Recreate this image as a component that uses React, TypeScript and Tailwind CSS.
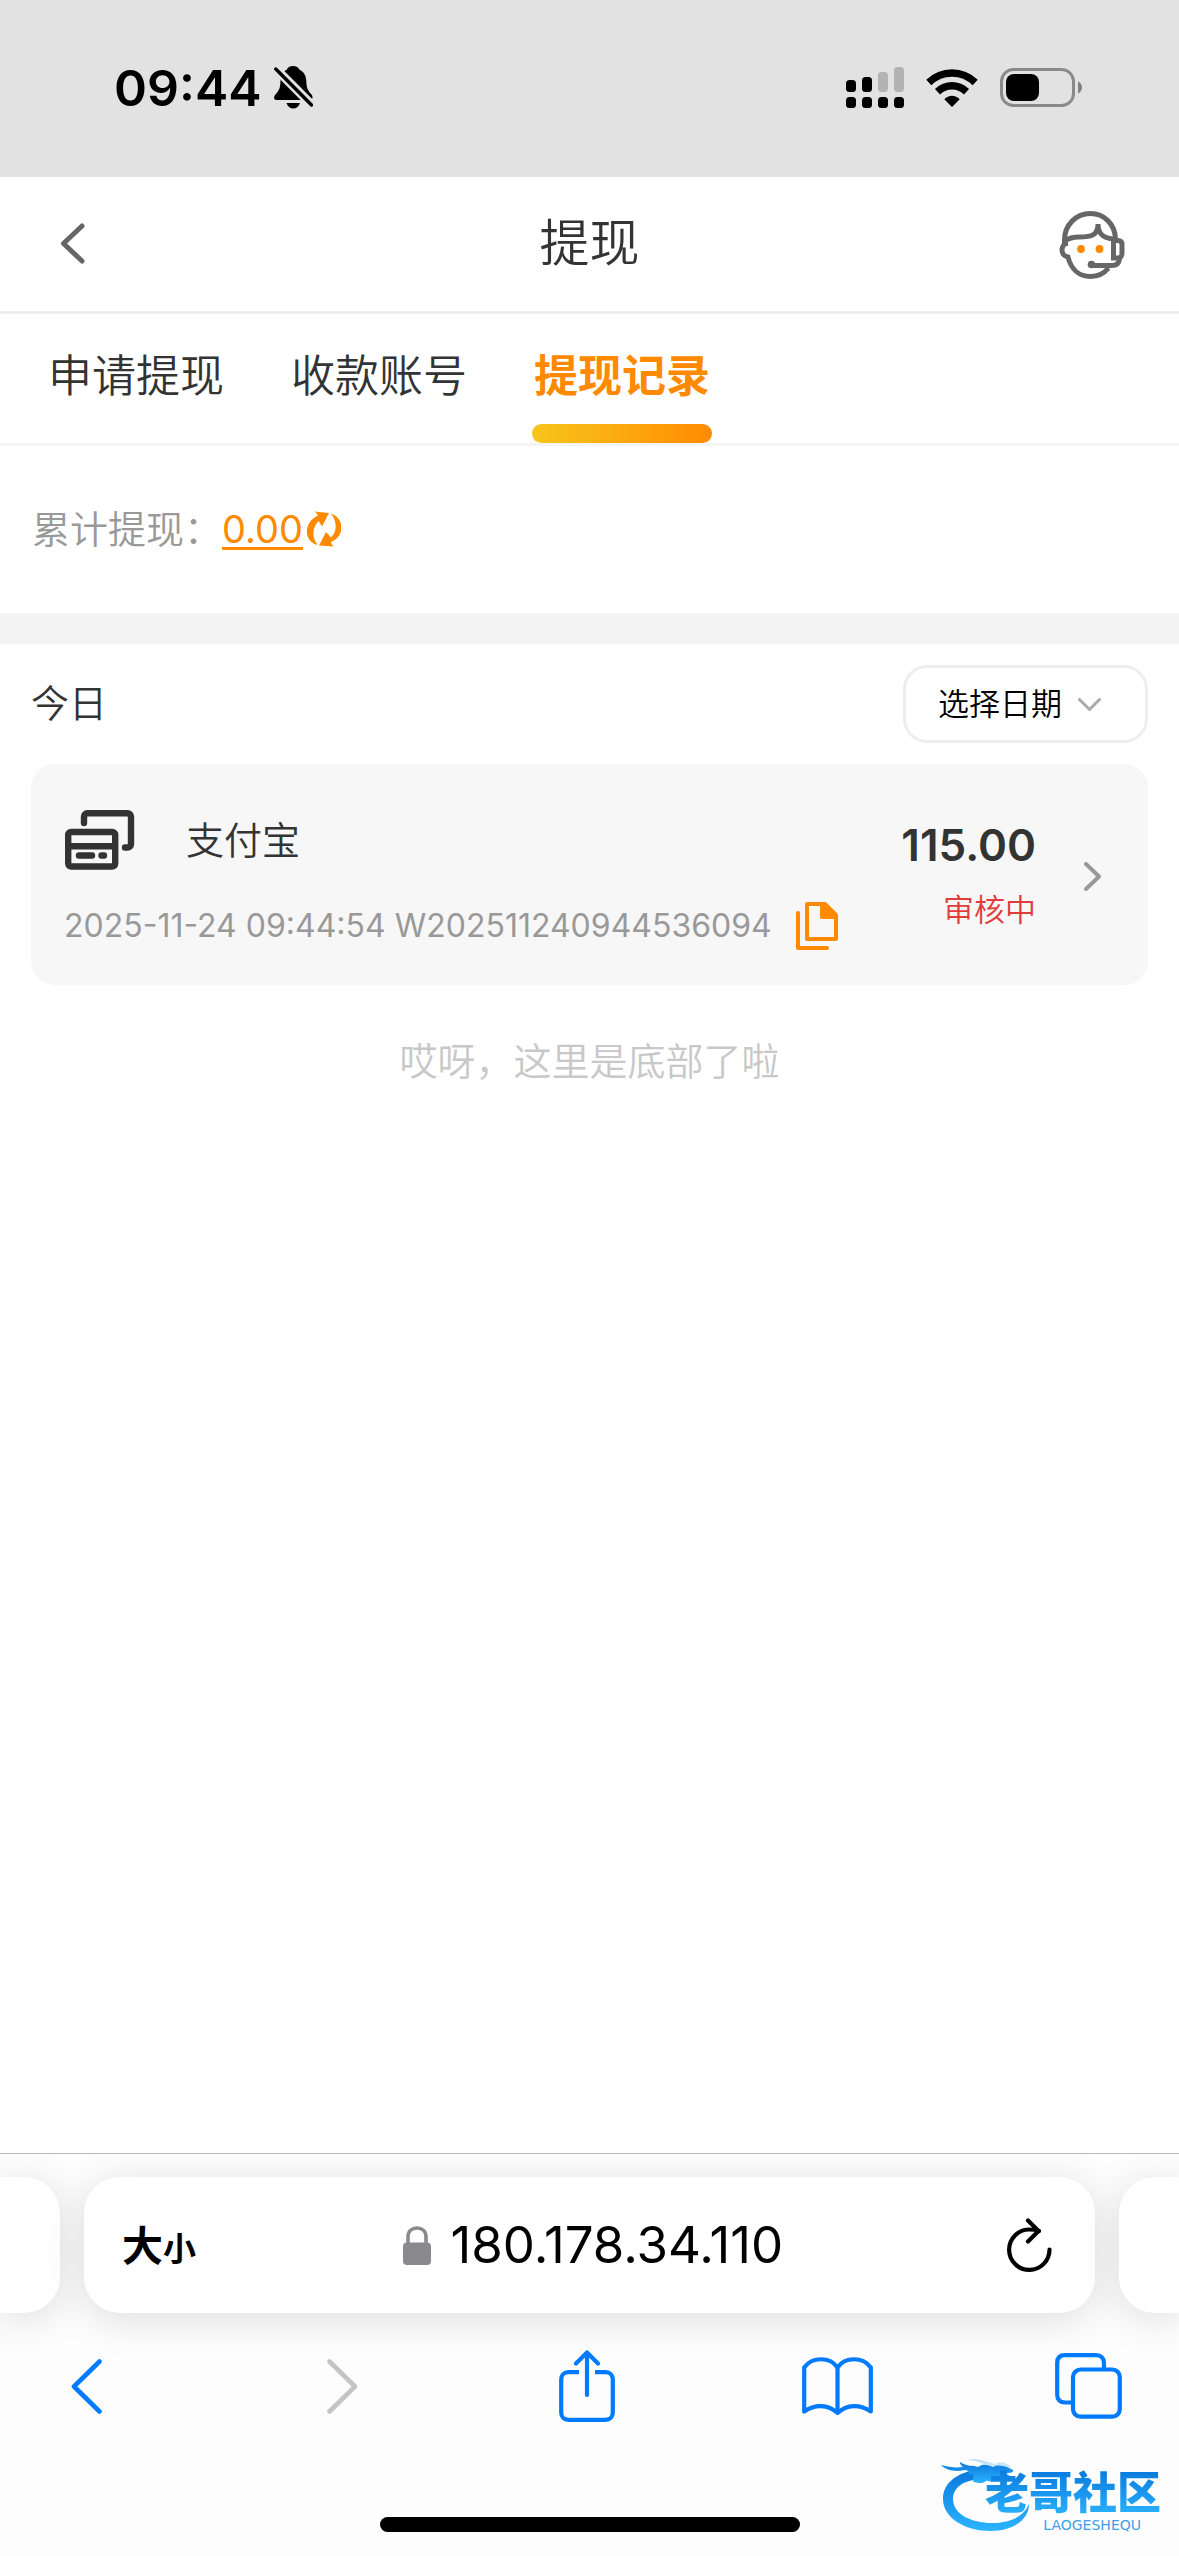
import { useState, type ReactNode } from 'react'

const TABS = ['申请提现', '收款账号', '提现记录']

interface WithdrawRecord {
  channel: string
  time: string
  orderNo: string
  amount: string
  status: string
}

const RECORDS: WithdrawRecord[] = [
  {
    channel: '支付宝',
    time: '2025-11-24 09:44:54',
    orderNo: 'W202511240944536094',
    amount: '115.00',
    status: '审核中',
  },
]

function BellOffIcon() {
  return (
    <svg width="39" height="43" viewBox="0 0 39 43" aria-hidden="true">
      <path
        d="M19 0C15.800 0 13.500 1.600 12.800 3.800C8.500 5.800 6.700 9.500 6.500 14.500C6.300 22 5.300 24 1.500 28.500C-1 31.500 0 34 3 34H35.500C38.500 34 39.500 31 37.500 28.500C33.500 24 32.600 22 32.300 15C32 9 29.500 5.500 25.500 3.800C24.500 1.500 22.300 0 19 0Z"
        fill="#000"
      />
      <path d="M12.500 37H26C25 40.500 22.500 42.500 19.200 42.500C16 42.500 13.500 40.500 12.500 37Z" fill="#000" />
      <path d="M0 1L40 41" stroke="#e2e2e2" strokeWidth="9" />
      <path d="M1.800 3L37.500 39" stroke="#000" strokeWidth="3.400" strokeLinecap="round" />
    </svg>
  )
}

function SignalIcon() {
  return (
    <svg width="58" height="42" viewBox="0 0 58 42" aria-hidden="true">
      <g fill="#000">
        <rect x="0" y="13" width="10" height="12" rx="3.500" />
        <rect x="16" y="10" width="10" height="15" rx="3.500" />
        <rect x="0" y="30" width="10" height="11" rx="3.500" />
        <rect x="16" y="30" width="10" height="11" rx="3.500" />
        <rect x="32" y="30" width="10" height="11" rx="3.500" />
        <rect x="48" y="30" width="10" height="11" rx="3.500" />
      </g>
      <g fill="#b3b3b3">
        <rect x="32" y="5" width="10" height="20" rx="3.500" />
        <rect x="48" y="0" width="10" height="25" rx="3.500" />
      </g>
    </svg>
  )
}

function WifiIcon() {
  return (
    <svg width="52" height="38" viewBox="0 0 52 38" aria-hidden="true">
      <path d="M2.800 13.500C16 .8 36 .8 49.200 13.500" fill="none" stroke="#000" strokeWidth="7.400" />
      <path d="M11.500 22.700C20 14.800 32 14.800 40.500 22.700" fill="none" stroke="#000" strokeWidth="7.400" />
      <path d="M26 38L18.300 30.200C22.500 25.500 29.500 25.500 33.700 30.200Z" fill="#000" />
    </svg>
  )
}

function BatteryIcon() {
  return (
    <svg width="83" height="40" viewBox="0 0 83 40" aria-hidden="true">
      <rect x="1.500" y="1.500" width="72" height="36" rx="12" fill="none" stroke="#8a8a8a" strokeWidth="3" />
      <rect x="6" y="6" width="33" height="27" rx="8" fill="#000" />
      <path d="M78 13.500C80.500 14.500 82 17 82 19.500C82 22 80.500 24.500 78 25.500Z" fill="#808080" />
    </svg>
  )
}

function ServiceIcon() {
  return (
    <svg width="66" height="68" viewBox="0 0 66 68" fill="none" stroke="#666" strokeWidth="5" aria-hidden="true">
      <path d="M5.500 33V29C5.500 14 17 2.500 31.500 2.500C45 2.500 56 13 56.500 28" />
      <path d="M5.500 30C10 27 14 26 20 26C33 26 39 24 39 13C39 23 44 27 54 28" />
      <path d="M9 32C1 33 1 45 9 46C12 58 20 65.500 31.500 65.500C39 65.500 45.500 62 49.500 57" />
      <path d="M54.500 29.500H59C61.500 29.500 63 31 63 33.500V42C63 45 61.500 47 59 47H54.500Z" />
      <path d="M60.500 48C60 52.500 57 54.500 53 54.500H33" />
      <circle cx="32.500" cy="53.500" r="3.800" fill="#666" stroke="none" />
      <circle cx="22" cy="38" r="3.900" fill="#ff8a00" stroke="none" />
      <circle cx="40.500" cy="38" r="3.900" fill="#ff8a00" stroke="none" />
    </svg>
  )
}

function RefreshIcon() {
  return (
    <svg width="34" height="36" viewBox="0 0 34 36" fill="#ff8a00" aria-hidden="true">
      <path d="M7 0.500L22 2L15 15.500L11.500 10C5 17 4.500 26 10.500 34C-4 30 -3.500 11 11 4.500C10 2.500 9 1.200 7 0.500Z" />
      <path d="M27 35.500L12 34.500L19 21L24 26.500C30 21 30.500 11 24 2.500C38 8 38 25 24 31C24.500 33 25.500 34.500 27 35.500Z" />
    </svg>
  )
}

function CardsIcon() {
  return (
    <svg
      width="70"
      height="60"
      viewBox="0 0 70 60"
      fill="none"
      stroke="#333"
      strokeWidth="6.400"
      strokeLinecap="round"
      aria-hidden="true"
    >
      <path d="M19 13V7C19 4.800 20.500 3.300 22.500 3.300H62.500C64.500 3.300 66 4.800 66 7V34C66 36 64.500 37.500 62.500 37.500H60" />
      <rect x="3.200" y="22" width="47" height="34.500" rx="3" />
      <path d="M3.200 36.200H50" strokeLinecap="butt" />
      <path d="M14 45.500H27M36.500 45.500H39" />
    </svg>
  )
}

function CopyIcon() {
  return (
    <svg width="42" height="48" viewBox="0 0 42 48" fill="none" stroke="#ff8a00" strokeWidth="4" aria-hidden="true">
      <path d="M2 11V46H31" strokeLinecap="round" strokeLinejoin="round" />
      <path d="M11 2H29L40 13V37H11Z" strokeLinejoin="round" />
      <path d="M24 1H30L41 12V17H26C25 17 24 16 24 15Z" fill="#ff8a00" stroke="none" />
    </svg>
  )
}

function ShareIcon() {
  return (
    <svg
      width="56"
      height="72"
      viewBox="0 0 56 72"
      fill="none"
      stroke="#007aff"
      strokeWidth="4.200"
      strokeLinecap="round"
      aria-hidden="true"
    >
      <path d="M28 3V45M17 13.500L28 2.500L39 13.500" strokeLinejoin="round" />
      <path d="M20 22.200H9.500C5 22.200 2.200 25 2.200 29.500V62.500C2.200 67 5 69.800 9.500 69.800H46.500C51 69.800 53.800 67 53.800 62.500V29.500C53.800 25 51 22.200 46.500 22.200H36" strokeLinecap="butt" />
    </svg>
  )
}

function BookIcon() {
  return (
    <svg
      width="71"
      height="59"
      viewBox="0 0 71 59"
      fill="none"
      stroke="#007aff"
      strokeWidth="4.200"
      strokeLinejoin="round"
      aria-hidden="true"
    >
      <path d="M2.200 10.500C10 -.5 28 -.5 35.500 10.500C43 -.5 61 -.5 68.800 10.500V54.500C58 47 45 47 35.500 56C26 47 13 47 2.200 54.500Z" />
      <path d="M35.500 10V55" />
    </svg>
  )
}

function WindowsIcon() {
  return (
    <svg width="67" height="66" viewBox="0 0 67 66" fill="none" stroke="#007aff" strokeWidth="4.200" aria-hidden="true">
      <path d="M17 49.500H10C5 49.500 2.200 46.500 2.200 42V10C2.200 5 5 2.200 10 2.200H41C46 2.200 49 5 49 10V15" />
      <rect x="18" y="16.500" width="46.800" height="47.200" rx="7.500" />
    </svg>
  )
}

function ReloadIcon() {
  return (
    <svg
      width="45"
      height="54"
      viewBox="0 0 45 54"
      fill="none"
      stroke="#000"
      strokeWidth="4.200"
      strokeLinecap="round"
      strokeLinejoin="round"
      aria-hidden="true"
    >
      <path d="M42.500 31.500A20.200 20.200 0 1 1 22.300 11.500C26 11.500 29 12 32 13" />
      <path d="M21 2.500L31.500 13L21 23.500" />
    </svg>
  )
}

function LockIcon() {
  return (
    <svg width="28" height="39" viewBox="0 0 28 39" aria-hidden="true">
      <path d="M5 18V11C5 5 9 2 14 2C19 2 23 5 23 11V18" fill="none" stroke="#8a8a8e" strokeWidth="3.600" />
      <rect x="0" y="16.500" width="28" height="22.500" rx="4" fill="#8a8a8e" />
    </svg>
  )
}

function Chevron({ w, h, d, color, stroke }: { w: number; h: number; d: string; color: string; stroke: number }) {
  return (
    <svg width={w} height={h} viewBox={`0 0 ${w} ${h}`} aria-hidden="true">
      <path d={d} fill="none" stroke={color} strokeWidth={stroke} strokeLinecap="round" strokeLinejoin="round" />
    </svg>
  )
}

function DragonLogo() {
  return (
    <svg width="90" height="76" viewBox="0 0 90 76" aria-hidden="true">
      <defs>
        <linearGradient id="dragon" x1="0" y1="0" x2="0" y2="1">
          <stop offset="0" stopColor="#0a78dc" />
          <stop offset="1" stopColor="#2cb4ff" />
        </linearGradient>
      </defs>
      <g fill="url(#dragon)">
        <path d="M33 14C14 18 2 28 2 43C2 62 24 75 50 75C70 75 88 65 88 48C83 60 70 67 51 67C30 67 12 58 12 43C12 32 22 24 37 24L46 18Z" />
        <path d="M0 9C8 11 14 12 22 11C21 10 19 9 19 6C26 11 32 9 37 11C42 7 48 9 52 11C57 8 62 10 66 11L72 14C73 17 68 17 64 17C68 19 71 21 69 24C65 23 62 22 59 23C61 25 58 26 54 25C50 27 48 24 45 25C40 29 36 26 32 26C34 24 30 22 33 19L28 18C26 16 30 15 24 14C15 16 6 15 0 9Z" />
        <path d="M26 4C34 1 44 5 54 8C61 5 66 7 71 12C62 10 56 12 50 10C42 8 34 4 26 4Z" opacity=".25" />
      </g>
    </svg>
  )
}

function StatusBar() {
  return (
    <div className="flex h-[177px] items-center justify-between bg-[#e2e2e2] pr-24 pb-[2px] pl-[114px]">
      <div className="flex items-center gap-3 text-black">
        <span className="text-[50px] leading-[60px] font-semibold">09:44</span>
        <BellOffIcon />
      </div>
      <div className="flex items-center gap-[22px]">
        <SignalIcon />
        <WifiIcon />
        <BatteryIcon />
      </div>
    </div>
  )
}

function RecordCard({ record }: { record: WithdrawRecord }) {
  return (
    <li className="flex items-center rounded-3xl bg-[#f7f7f7] pt-[38px] pr-[47px] pb-[35px] pl-[33px]">
      <div className="flex-1 pt-2">
        <div className="flex items-center gap-[51px] pl-[1px]">
          <CardsIcon />
          <span className="text-[38px] leading-[58px]">{record.channel}</span>
        </div>
        <div className="mt-8 flex items-center gap-6 text-[32px] leading-[48px] font-normal text-[#999]">
          <span className="whitespace-nowrap">
            {record.time} {record.orderNo}
          </span>
          <button type="button" aria-label="复制单号">
            <CopyIcon />
          </button>
        </div>
      </div>
      <div className="flex flex-col items-end gap-[14px]">
        <span className="text-[44px] leading-[54px] font-semibold">{record.amount}</span>
        <span className="text-[31px] leading-[48px] text-[#e03c3c]">{record.status}</span>
      </div>
      <button type="button" aria-label="查看详情" className="ml-12">
        <Chevron w={17} h={29} d="M2 2L15 14.500L2 27" color="#999" stroke={4} />
      </button>
    </li>
  )
}

function ToolButton({ label, children }: { label: string; children: ReactNode }) {
  return (
    <button type="button" aria-label={label} className="flex h-[72px] min-w-[70px] items-center justify-center">
      {children}
    </button>
  )
}

function BrowserBar() {
  const shadow = 'shadow-[0_6px_40px_rgba(0,0,0,0.13)]'

  return (
    <footer className="relative overflow-hidden border-t border-[#b9b9b9] bg-[#fdfdfd] pt-[23px] pb-6">
      <div className="flex h-[136px] items-stretch gap-6">
        <div className={`w-[60px] rounded-r-[36px] bg-white ${shadow}`} />
        <div className={`flex flex-1 items-center justify-between rounded-[36px] bg-white pr-[43px] pl-[38px] text-black ${shadow}`}>
          <button type="button" className="flex items-baseline pt-1 font-bold">
            <span className="text-[41px] leading-[60px]">大</span>
            <span className="text-[33px] leading-[60px]">小</span>
          </button>
          <div className="flex items-center gap-5">
            <LockIcon />
            <input
              aria-label="地址"
              defaultValue="180.178.34.110"
              className="w-[350px] bg-transparent text-[51px] leading-[60px] font-normal outline-none"
            />
          </div>
          <button type="button" aria-label="重新载入">
            <ReloadIcon />
          </button>
        </div>
        <div className={`w-[60px] rounded-l-[36px] bg-white ${shadow}`} />
      </div>

      <nav className="mt-[37px] flex justify-between pr-14 pl-[51px]">
        <ToolButton label="后退">
          <Chevron w={31} h={55} d="M28.500 2.500L3 27.500L28.500 52.500" color="#007aff" stroke={4.6} />
        </ToolButton>
        <ToolButton label="前进">
          <span className="pl-3">
            <Chevron w={31} h={55} d="M2.500 2.500L28 27.500L2.500 52.500" color="#c4c4c4" stroke={4.6} />
          </span>
        </ToolButton>
        <ToolButton label="分享">
          <ShareIcon />
        </ToolButton>
        <ToolButton label="书签">
          <BookIcon />
        </ToolButton>
        <ToolButton label="标签页">
          <WindowsIcon />
        </ToolButton>
      </nav>

      <div className="mx-auto mt-[95px] h-[15px] w-[420px] rounded-full bg-black" />

      {/* community watermark over the bottom corner */}
      <div className="pointer-events-none absolute right-[18px] bottom-[24px] flex items-end">
        <DragonLogo />
        <div className="-ml-[46px] flex flex-col items-end">
          <span className="bg-linear-to-b from-[#0a78dc] to-[#2cb4ff] bg-clip-text text-[44px] leading-[50px] font-black text-transparent">
            老哥社区
          </span>
          <span className="pr-5 font-['DejaVu_Sans'] text-[14px] leading-[14px] font-normal text-[#3f9fe6]">
            LAOGESHEQU
          </span>
        </div>
      </div>
    </footer>
  )
}

export default function App() {
  const [activeTab, setActiveTab] = useState(2)

  return (
    <div className="flex min-h-screen flex-col bg-white font-[Inter,'Noto_Sans_CJK_SC',sans-serif] font-[350] text-[#333]">
      <StatusBar />

      <header className="flex h-[137px] items-center justify-between border-b-[3px] border-[#eee] px-[54px] pb-[2px]">
        <button type="button" aria-label="返回" className="flex w-[66px] pl-[6px]">
          <Chevron w={25} h={41} d="M22 3L3.500 20.500L22 38" color="#666" stroke={5} />
        </button>
        <h1 className="text-[50px] leading-[60px] font-[350]">提现</h1>
        <button type="button" aria-label="客服" className="pt-1">
          <ServiceIcon />
        </button>
      </header>

      <div role="tablist" className="flex gap-[63px] border-b-[3px] border-[#f4f4f4] pl-[46px]">
        {TABS.map((tab, i) => (
          <button
            key={tab}
            type="button"
            role="tab"
            aria-selected={i === activeTab}
            onClick={() => setActiveTab(i)}
            className={`flex w-[180px] flex-col items-center pt-8 text-[44px] leading-[60px] whitespace-nowrap ${
              i === activeTab ? 'font-bold text-[#ff8a00]' : ''
            }`}
          >
            {tab}
            <span
              className={`mt-[18px] h-[19px] w-full rounded-full ${
                i === activeTab ? 'bg-linear-to-r from-[#f6c51c] to-[#ff8a00]' : ''
              }`}
            />
          </button>
        ))}
      </div>

      <main className="flex-1">
        <section className="flex h-[198px] items-center border-b-[31px] border-[#f4f4f4] pb-[2px] pl-8 text-[38px] leading-[60px]">
          <span className="text-[#999]">累计提现：</span>
          <a href="#total" className="font-normal text-[#ff8a00] underline decoration-[3px] underline-offset-[4px]">
            0.00
          </a>
          <button type="button" aria-label="刷新" className="ml-1">
            <RefreshIcon />
          </button>
        </section>

        <section className="px-[31px] pt-[21px]">
          <div className="flex items-center justify-between">
            <h2 className="pb-[2px] text-[38px] leading-[60px] font-[350]">今日</h2>
            <button
              type="button"
              className="flex h-[78px] items-center gap-4 rounded-3xl border-[3px] border-[#eee] pr-11 pl-8 text-[31px] leading-[48px] text-black"
            >
              选择日期
              <Chevron w={23} h={13} d="M1.500 1.500L11.500 11.500L21.500 1.500" color="#aaa" stroke={3} />
            </button>
          </div>
          <ul className="mt-[21px]">
            {RECORDS.map((record) => (
              <RecordCard key={record.orderNo} record={record} />
            ))}
          </ul>
          <p className="mt-[46px] text-center text-[38px] leading-[60px] text-[#c8c8c8]">哎呀，这里是底部了啦</p>
        </section>
      </main>

      <BrowserBar />
    </div>
  )
}
